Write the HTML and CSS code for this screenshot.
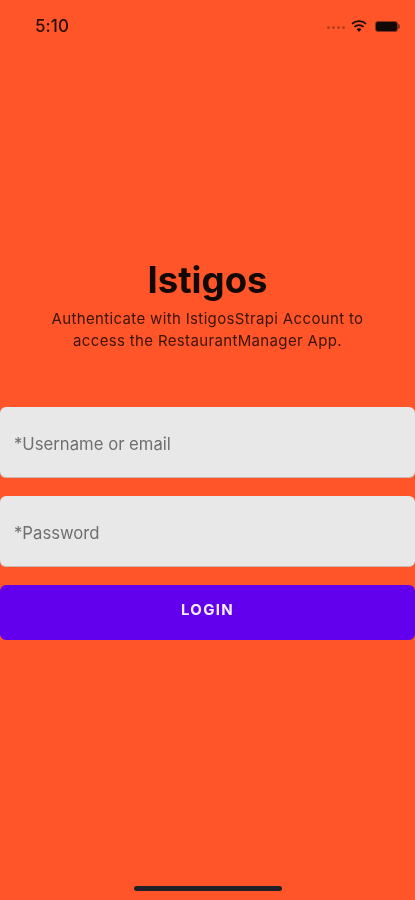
FILE: index.html
```html
<!DOCTYPE html>
<html lang="en">
<head>
<meta charset="utf-8">
<title>Istigos</title>
<link rel="stylesheet" href="styles.css">
</head>
<body>
<div class="screen">
  <header class="status">
    <span class="time">5:10</span>
    <div class="status-icons">
      <div class="dots"><i></i><i></i><i></i><i></i></div>
      <svg class="wifi" width="16" height="12" viewBox="0 0 16 12" aria-hidden="true">
        <path d="M8 12 5.6 9.2a3.6 3.6 0 0 1 4.8 0Z" fill="#1a0a05"/>
        <path d="M3.4 6.9a6.8 6.8 0 0 1 9.2 0" fill="none" stroke="#1a0a05" stroke-width="1.7"/>
        <path d="M1 3.9a10.4 10.4 0 0 1 14 0" fill="none" stroke="#1a0a05" stroke-width="1.7"/>
      </svg>
      <div class="battery"><div class="battery-body"></div><div class="battery-cap"></div></div>
    </div>
  </header>
  <main class="content">
    <h1 class="title">Istigos</h1>
    <p class="subtitle">Authenticate with IstigosStrapi Account to<br>access the RestaurantManager App.</p>
    <form class="form">
      <div class="field">*Username or email</div>
      <div class="field">*Password</div>
      <div class="button">LOGIN</div>
    </form>
  </main>
  <div class="home-indicator"></div>
</div>
</body>
</html>
```

FILE: styles.css
```css
* { box-sizing: border-box; }
html, body { margin: 0; padding: 0; }
body { background: #ff5528; font-family: Inter, "Liberation Sans", sans-serif; }
.screen {
  width: 415px;
  height: 900px;
  overflow: hidden;
  display: flex;
  flex-direction: column;
  background: #ff5528;
  color: #120805;
  filter: blur(0.5px);
}
.status {
  height: 52px;
  flex: none;
  display: flex;
  align-items: center;
  justify-content: space-between;
  padding: 0 15px 0 35px;
}
.time { font-size: 17px; font-weight: 500; color: #2a0f06; letter-spacing: 0.1px; }
.status-icons { display: flex; align-items: center; }
.dots { display: flex; gap: 2px; margin-right: 6px; margin-top: 3px; }
.dots i { width: 3px; height: 3px; border-radius: 50%; background: #b5401f; }
.wifi { margin-right: 8px; }
.battery { display: flex; align-items: center; margin-top: 1px; }
.battery-body { width: 23px; height: 11px; background: #120805; border: 1px solid #8a3117; border-radius: 3px; }
.battery-cap { width: 2px; height: 5px; margin-left: 0; background: #8a3117; border-radius: 0 2px 2px 0; }
.content { flex: 1; display: flex; flex-direction: column; align-items: stretch; padding-top: 206px; }
.title { margin: 0; font-size: 36.6px; line-height: 44px; font-weight: 700; text-align: center; color: #120805; }
.subtitle { margin: 6px 0 0; font-size: 15px; line-height: 22px; text-align: center; color: #3a1408; letter-spacing: 0.35px; }
.form { display: flex; flex-direction: column; gap: 18px; margin-top: 55px; }
.field {
  height: 71px;
  display: flex;
  align-items: center;
  padding: 4px 14px 0;
  background: #e8e8e8;
  border-radius: 6px;
  border-bottom: 1px solid #c9b8b2;
  font-size: 16.7px;
  color: #6f6f6f;
}
.button {
  height: 55px;
  display: flex;
  align-items: center;
  justify-content: center;
  padding-bottom: 5px;
  margin-top: -0.5px;
  background: #6200ee;
  border-radius: 6px;
  color: #f4ecff;
  font-size: 15px;
  font-weight: 700;
  letter-spacing: 1.3px;
}
.home-indicator { flex: none; width: 148px; height: 5px; margin: 0 auto 9px; border-radius: 3px; background: #1f2126; }
```
